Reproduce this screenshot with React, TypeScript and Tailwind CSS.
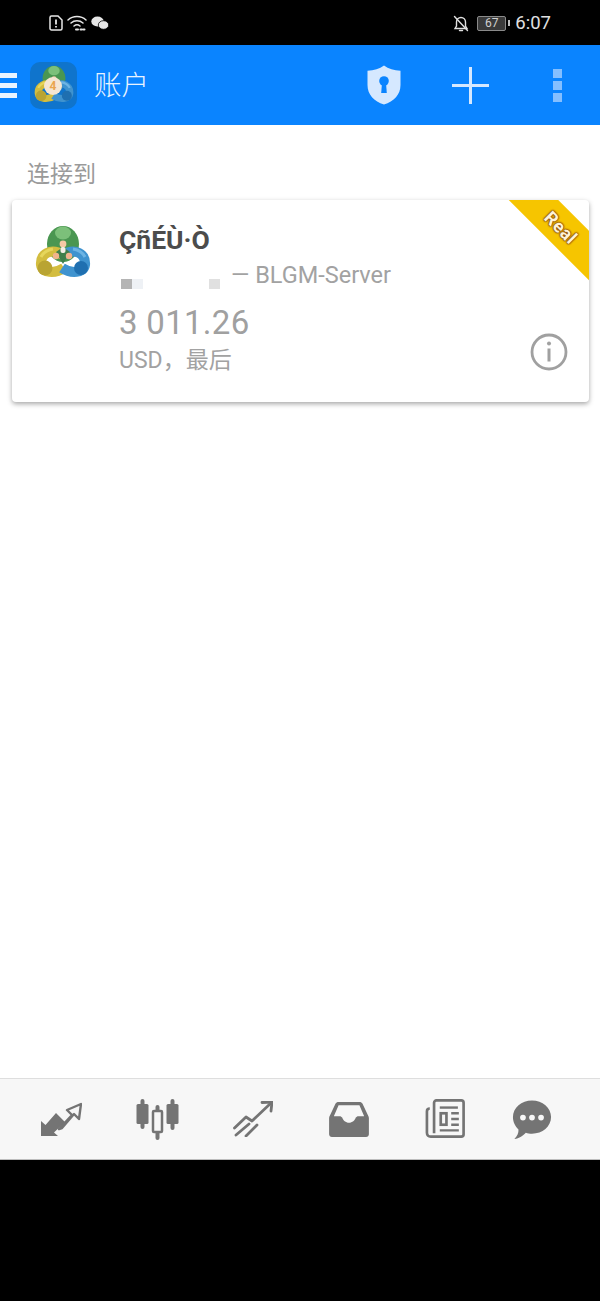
import { ReactNode } from 'react';

const FONT = "font-['Roboto','Noto_Sans_CJK_SC',sans-serif]";

function MtLogo({ size, className }: { size: number; className?: string }) {
  return (
    <svg width={size} height={size} viewBox="0 0 56 56" fill="none" className={className}>
      <ellipse cx="28" cy="19" rx="16" ry="18" fill="#4a9651" />
      <ellipse cx="28" cy="8" rx="8" ry="6.500" fill="#7cc07a" />
      <path d="M28 30c-12-8-23-1-22 10 1 8 14 9 23 3" stroke="#d3bd3f" strokeWidth="10" />
      <path d="M18 24c-6 1-10 4-12 8" stroke="#e6d65c" strokeWidth="3" />
      <circle cx="10" cy="43" r="7.500" fill="#b9a432" />
      <path d="M28 30c12-8 23-1 22 10-1 8-14 9-23 3" stroke="#3f93cf" strokeWidth="10" />
      <path d="M38 24c6 1 10 4 12 8" stroke="#6db4e4" strokeWidth="3" />
      <circle cx="46" cy="43" r="7" fill="#1f6fb0" />
      <path d="M21 27l7-5 7 5-7 12z" fill="#3f7f4a" />
      <circle cx="28" cy="19" r="3.400" fill="#f4c9a5" />
      <rect x="25.500" y="22" width="5" height="6" rx="2" fill="#f2efe6" />
      <circle cx="21" cy="31" r="3.200" fill="#f0b48c" />
      <circle cx="34" cy="31" r="3.200" fill="#f0b48c" />
    </svg>
  );
}

function AppIcon() {
  return (
    <div className="relative flex h-[47px] w-[47px] items-center justify-center rounded-[10px] bg-[#0f74cc]">
      <MtLogo size={40} />
      <span className="absolute left-[14px] top-[15px] flex h-[18px] w-[18px] items-center justify-center rounded-full bg-[#f5e6d2] text-[12px] font-bold text-[#eaa54e]">
        4
      </span>
    </div>
  );
}

function StatusIcons() {
  return (
    <div className="flex items-center gap-[4px]">
      <svg width="14" height="16" viewBox="0 0 14 16" fill="none" stroke="#e6e6e6" strokeWidth="1.500">
        <path d="M1 2.500c0-.8.6-1.500 1.500-1.500H9l4 4v8.500c0 .8-.6 1.500-1.500 1.500h-9C1.600 15 1 14.300 1 13.500z" />
        <path d="M7 4.500v5M7 11v1.500" strokeWidth="1.800" />
      </svg>
      <svg width="20" height="17" viewBox="0 0 20 17" fill="none" stroke="#e6e6e6" strokeWidth="1.500" strokeLinecap="round">
        <path d="M1 5c5-4.600 13-4.600 18 0" />
        <path d="M4 8c3.400-3 8.600-3 12 0" />
        <path d="M7 11c1.800-1.500 4.200-1.500 6 0" />
        <path d="M9 14.500h2M13.500 14.500h1.500M16.500 14.500h1" strokeWidth="2" />
      </svg>
      <svg width="18" height="14" viewBox="0 0 18 14" fill="#e6e6e6">
        <ellipse cx="6.500" cy="5.500" rx="6.200" ry="5" />
        <ellipse cx="12.500" cy="9" rx="5.200" ry="4.300" stroke="#000" strokeWidth="0.800" />
      </svg>
    </div>
  );
}

function StatusBar() {
  return (
    <div className="flex h-[45px] items-center justify-between bg-black pl-[49px] pr-[49px] pt-[1px] text-[#dcdcdc]">
      <StatusIcons />
      <div className="flex items-center">
        <svg width="16" height="17" viewBox="0 0 16 17" fill="none" stroke="#e0e0e0" strokeWidth="1.400" className="mr-[8px]">
          <path d="M2 13.500h12l-1.500-2.500V7c0-2.500-2-4.500-4.500-4.500S3.500 4.500 3.500 7v4z" />
          <path d="M6.500 15.500h3M1.500 1.500l13 14" strokeLinecap="round" />
        </svg>
        <div className="flex h-[15px] w-[29px] items-center justify-center rounded-[2px] border border-[#8a8a8a] bg-[#3a3a3a] text-[12px] leading-none text-[#cfcfcf]">
          67
        </div>
        <div className="ml-[2px] mr-[5px] h-[6px] w-[2px] bg-[#bdbdbd]" />
        <span className="text-[18.500px] leading-none text-[#e0e0e0]">6:07</span>
      </div>
    </div>
  );
}

function Toolbar() {
  return (
    <header className="flex h-[80px] items-center bg-[#0a84ff]">
      <div className="flex w-[17px] flex-col gap-[5px]">
        <div className="h-[5px] bg-[#eaf4ff]" />
        <div className="h-[5px] bg-[#eaf4ff]" />
        <div className="h-[5px] bg-[#eaf4ff]" />
      </div>
      <div className="ml-[13px]">
        <AppIcon />
      </div>
      <h1 className="ml-[17px] mt-[2px] text-[27.500px] font-light leading-none text-[#e8f3ff]">账户</h1>
      <div className="ml-auto flex items-center">
        <svg width="38" height="42" viewBox="0 0 38 42" className="mr-[49px]">
          <path
            d="M19 1.500c4.500 3.300 10 5 16.500 5.300V21c0 9.500-6.500 16.500-16.500 19.500C9 37.500 2.500 30.500 2.500 21V6.800C9 6.500 14.500 4.800 19 1.500z"
            fill="#d5e8ff"
          />
          <circle cx="19" cy="17" r="4.800" fill="#0a84ff" />
          <path d="M17 19h4l.8 10h-5.600z" fill="#0a84ff" />
        </svg>
        <div className="relative mr-[64px] h-[37px] w-[37px]">
          <div className="absolute left-0 top-[17px] h-[3px] w-[37px] bg-[#d5e8ff]" />
          <div className="absolute left-[17px] top-0 h-[37px] w-[3px] bg-[#d5e8ff]" />
        </div>
        <div className="mr-[38px] flex w-[9px] flex-col gap-[3px]">
          <div className="h-[9px] bg-[#85bfff]" />
          <div className="h-[9px] bg-[#85bfff]" />
          <div className="h-[9px] bg-[#85bfff]" />
        </div>
      </div>
    </header>
  );
}

function AccountCard() {
  return (
    <article className="relative ml-[12px] mr-[11px] mt-[12px] h-[202px] overflow-hidden rounded-[4px] bg-white shadow-[0_2px_5px_rgba(0,0,0,0.35)]">
      <div className="absolute right-[-50px] top-[11px] flex h-[35px] w-[154px] rotate-45 items-center justify-center bg-[#f6c500] pr-[3px]">
        <span className="text-[18px] font-bold tracking-[0.500px] text-[#fff3d6] [text-shadow:0_0_2px_#8a4a10,0_0_2px_#8a4a10,0_0_2px_#8a4a10,0_0_1px_#8a4a10]">
          Real
        </span>
      </div>
      <div className="flex pl-[23px] pt-[25px]">
        <MtLogo size={56} className="shrink-0" />
        <div className="ml-[28px] flex flex-col">
          <div className="text-[26.500px] font-bold leading-[30px] text-[#4c4c4c]">ÇñÉÙ·Ò</div>
          <div className="mt-[9px] flex h-[24px] items-center text-[23.500px] leading-none text-[#a2a2a2]">
            <span className="ml-[2px] mt-[16px] h-[10px] w-[11px] bg-[#b4b4b4]" />
            <span className="mt-[16px] h-[10px] w-[11px] bg-[#eef1f5]" />
            <span className="ml-[66px] mt-[16px] h-[10px] w-[11px] bg-[#e0e0e0]" />
            <span className="ml-[11px] whitespace-nowrap">— BLGM-Server</span>
          </div>
          <div className="mt-[16px] text-[33px] leading-[38px] tracking-[0.300px] text-[#a0a0a0]">3 011.26</div>
          <div className="mt-[6px] text-[23px] leading-[26px] text-[#a2a2a2]">USD，最后</div>
        </div>
      </div>
      <svg width="38" height="38" viewBox="0 0 38 38" fill="none" className="absolute bottom-[31px] right-[21px]">
        <circle cx="19" cy="19" r="17" stroke="#a0a0a0" strokeWidth="2.800" />
        <rect x="17.500" y="15.500" width="3" height="13" fill="#a0a0a0" />
        <circle cx="19" cy="10.500" r="2" fill="#a0a0a0" />
      </svg>
    </article>
  );
}

function NavSlot({ children, last }: { children: ReactNode; last?: boolean }) {
  return <div className={last ? 'flex w-[78px] items-center justify-center' : 'flex w-[96px] items-center justify-center'}>{children}</div>;
}

function BottomNav() {
  return (
    <nav className="flex h-[81px] items-center border-t border-[#dedede] bg-[#f7f7f7] pl-[13px] shadow-[0_1px_0_#bdbdbd]">
      <NavSlot>
        <svg width="42" height="36" viewBox="0 0 42 36" fill="none">
          <path d="M1 35V20l4.500 4L16 12l9 9-11 10.500 4 3.500z" fill="#747474" />
          <path
            d="M19 28L32 14l-5-5 14-6-2 15-5-5-12 14z"
            stroke="#747474"
            strokeWidth="2.400"
            strokeLinejoin="round"
          />
        </svg>
      </NavSlot>
      <NavSlot>
        <svg width="43" height="41" viewBox="0 0 43 41" fill="#747474">
          <rect x="4.500" y="0" width="4" height="30" rx="2" />
          <rect x="0.500" y="5" width="12" height="20" rx="1.500" />
          <rect x="34.500" y="0" width="4" height="31" rx="2" />
          <rect x="30.500" y="5" width="12" height="20" rx="1.500" />
          <rect x="19.500" y="6" width="4" height="35" rx="2" />
          <rect x="17" y="12" width="9" height="21" rx="1" fill="#f7f7f7" stroke="#747474" strokeWidth="2.500" />
        </svg>
      </NavSlot>
      <NavSlot>
        <svg width="40" height="36" viewBox="0 0 40 36" fill="none" stroke="#747474" strokeWidth="2.800" strokeLinecap="round" strokeLinejoin="round">
          <path d="M1.500 27L13 16l6 4L38 2" />
          <path d="M29 1.500L39 1l-1 9" />
          <path d="M3 34l13-11M13 35l11-11" />
        </svg>
      </NavSlot>
      <NavSlot>
        <svg width="40" height="36" viewBox="0 0 42 38" fill="#747474">
          <path
            fillRule="evenodd"
            d="M10 1h22c1.500 0 2.600.7 3.300 2L41 15c.6 1 1 2 1 3v17c0 1.600-1.300 3-3 3H3c-1.700 0-3-1.400-3-3V18c0-1 .3-2 1-3L6.700 3C7.400 1.700 8.500 1 10 1zm0 3.500L5 16h6c1.300 0 2.300.6 3 1.700.6 2.600 3.600 5.300 7 5.300s6.400-2.700 7-5.300c.7-1.100 1.700-1.700 3-1.700h6L32 4.500z"
          />
        </svg>
      </NavSlot>
      <NavSlot>
        <svg width="41" height="40" viewBox="0 0 42 42" fill="none" stroke="#747474" strokeWidth="2.800">
          <path d="M9 36V4c0-1.500 1-2.500 2.500-2.500h26c1.500 0 2.500 1 2.500 2.500v33c0 1.500-1 2.500-2.500 2.500H5.500C3 39.500 1.500 38 1.500 35.500V13c0-2 1-3 3-3" />
          <path d="M15 9h19" strokeWidth="2.500" />
          <rect x="16" y="15" width="6" height="12" strokeWidth="2.800" />
          <path d="M27 15h8M27 21h8M27 27h8M15 33h20" strokeWidth="2.500" />
        </svg>
      </NavSlot>
      <NavSlot last>
        <svg width="40" height="41" viewBox="0 0 42 42" fill="#747474">
          <path d="M21 1c11 0 20 7.500 20 17.500S32 36 21 36c-2.500 0-4.500-.3-6.500-1-2.500 3-7 6-12 6.500 3-3 4.600-6.500 4.300-10C3.500 28.500 1 24 1 18.500 1 8.500 10 1 21 1z" />
          <circle cx="11.500" cy="19" r="3" fill="#f7f7f7" />
          <circle cx="21" cy="19" r="3" fill="#f7f7f7" />
          <circle cx="30.500" cy="19" r="3" fill="#f7f7f7" />
        </svg>
      </NavSlot>
    </nav>
  );
}

export default function App() {
  return (
    <div className={`flex h-[1301px] w-[600px] flex-col overflow-hidden bg-black ${FONT}`}>
      <StatusBar />
      <Toolbar />
      <main className="h-[953px] bg-white pt-[36px]">
        <h2 className="pl-[27px] text-[23px] leading-[27px] text-[#9a9a9a]">连接到</h2>
        <AccountCard />
      </main>
      <BottomNav />
    </div>
  );
}
